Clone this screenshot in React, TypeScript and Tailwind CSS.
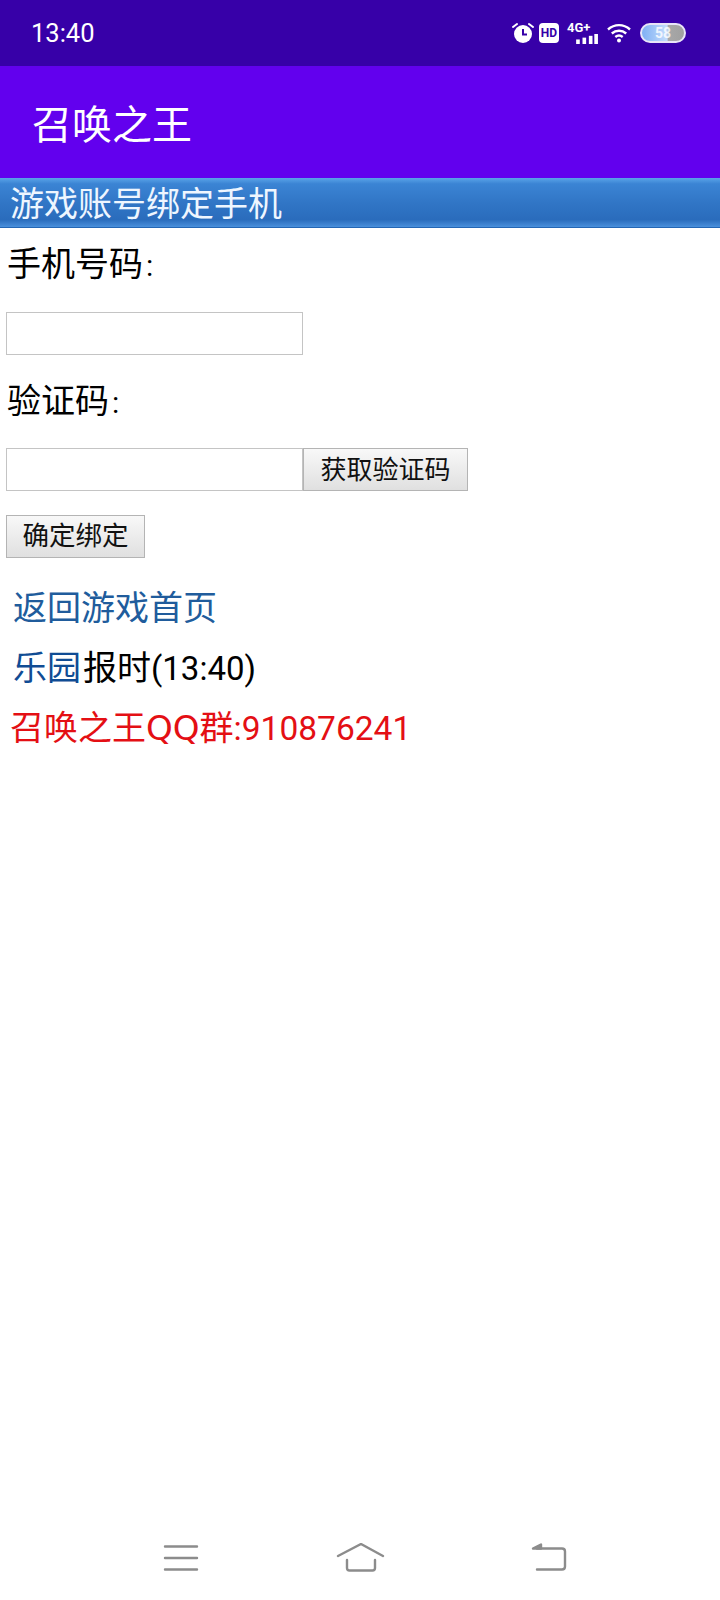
const FONT = "font-['Roboto','Noto_Sans_CJK_SC',sans-serif]";

function StatusIcons() {
  return (
    <div className="flex items-center">
      <svg width="22" height="22" viewBox="0 0 22 22" className="mr-[5px]">
        <path d="M1 5l4-3M21 5l-4-3" stroke="#fff" strokeWidth="2" strokeLinecap="round" />
        <circle cx="11" cy="12" r="9" fill="#fff" />
        <path d="M11 7v5.500h4" fill="none" stroke="#3600a8" strokeWidth="2" />
      </svg>
      <div className="mr-[8px] flex h-[20px] w-[20px] items-center justify-center rounded-[4px] bg-white text-[12px] font-bold leading-none text-[#3600a8]">
        HD
      </div>
      <div className="mr-[8px] flex h-[22px] w-[32px] flex-col items-start">
        <span className="text-[13px] font-bold leading-[12px] text-white">4G+</span>
        <svg width="25" height="11" viewBox="0 0 25 11" className="ml-[8px]">
          <rect x="0" y="6" width="4" height="5" fill="#fff" />
          <rect x="7" y="4" width="4" height="7" fill="#fff" />
          <rect x="14" y="2" width="4" height="9" fill="#fff" />
          <rect x="20" y="0" width="4" height="11" fill="#fff" />
        </svg>
      </div>
      <svg width="24" height="20" viewBox="0 0 24 20" className="mr-[9px]">
        <path d="M1 6.500C7.500.7 16.500.7 23 6.500M4.800 10.500c4.200-3.700 10.200-3.700 14.400 0M8.300 14c2.200-1.700 5.200-1.700 7.400 0" fill="none" stroke="#fff" strokeWidth="2.400" />
        <circle cx="12" cy="17.500" r="2" fill="#fff" />
      </svg>
      <div className="flex h-[20px] w-[46px] items-center justify-center rounded-full border-2 border-[#e8e4f8] bg-[linear-gradient(90deg,#7fb0f4_0%,#c4dcfb_60%,#a8a8a8_62%,#a0a0a0_100%)] text-[14px] font-bold leading-none text-white/80">
        58
      </div>
    </div>
  );
}

function NavBar() {
  return (
    <div className="absolute bottom-0 left-0 flex h-[80px] w-full items-start pt-[23px]">
      <svg width="720" height="36" viewBox="0 0 720 36" fill="none" stroke="#8c8c8c" strokeWidth="2.400" strokeLinecap="round" strokeLinejoin="round">
        <path d="M165 3.500h32M165 15h32M165 26.500h32" />
        <path d="M338 13 L361 1 L383 13" />
        <path d="M347 17v8q0 2.500 2.500 2.500h23q2.500 0 2.500-2.500v-8" />
        <path d="M537 5.500h25q3 0 3 3v15q0 3-3 3h-25" />
        <path d="M533 5.500l8-4v4z" fill="#8c8c8c" />
      </svg>
    </div>
  );
}

export default function App() {
  return (
    <div className={`relative h-[1600px] w-[720px] overflow-hidden bg-white ${FONT}`}>
      <div className="flex h-[66px] items-center justify-between bg-[#3700a8] pl-[31px] pr-[34px]">
        <span className="pt-[2px] text-[25.500px] leading-none text-white">13:40</span>
        <StatusIcons />
      </div>

      <div className="flex h-[112px] items-center bg-[#6200ee] pl-[32px] pt-[7px]">
        <span className="text-[40px] leading-none text-white">召唤之王</span>
      </div>

      <div className="flex h-[50px] items-center border-b border-[#2466b4] bg-[linear-gradient(180deg,#5aa4e8_0%,#3b84d4_12%,#3176c6_50%,#2a6cbc_85%,#4a90dc_100%)] pl-[10px] pt-[2px] text-[34px] leading-none text-[#eef6ff]">
        游戏账号绑定手机
      </div>

      <div className="pl-[7px] pt-[17px] text-[34px] leading-[38px] text-black">
        手机号码<span className="ml-[3px] text-[30px] leading-none">:</span>
      </div>
      <div className="pl-[6px] pt-[29px]">
        <input className="block h-[43px] w-[297px] border border-[#c4c4c4] bg-white" />
      </div>

      <div className="pl-[7px] pt-[27px] text-[34px] leading-[38px] text-black">
        验证码<span className="ml-[3px] text-[30px] leading-none">:</span>
      </div>
      <div className="flex pl-[6px] pt-[28px]">
        <input className="block h-[43px] w-[297px] border border-[#c4c4c4] bg-white" />
        <button className="h-[43px] w-[165px] border border-[#b4b4b4] bg-[linear-gradient(180deg,#f8f8f8,#e0e0e0)] text-[26px] leading-none text-[#111]">
          获取验证码
        </button>
      </div>

      <div className="pl-[6px] pt-[24px]">
        <button className="block h-[43px] w-[139px] border border-[#b4b4b4] bg-[linear-gradient(180deg,#f8f8f8,#e0e0e0)] text-[26.500px] leading-none text-[#111]">
          确定绑定
        </button>
      </div>

      <div className="pl-[13px] pt-[27px] text-[34px] leading-[46px] text-[#205c9c]">返回游戏首页</div>
      <div className="pl-[13px] pt-[14px] text-[34px] leading-[46px] text-black">
        <span className="text-[#104c94]">乐园</span>
        <span className="ml-[2px]">报时</span>
        <span className="text-[33px] leading-none">(13:40)</span>
      </div>
      <div className="pl-[10px] pt-[14px] text-[34px] leading-[46px] text-[#e40f14]">
        召唤之王<span className="font-['DejaVu_Sans'] leading-none">QQ</span>群:<span className="text-[33.500px] leading-none">910876241</span>
      </div>

      <NavBar />
    </div>
  );
}
